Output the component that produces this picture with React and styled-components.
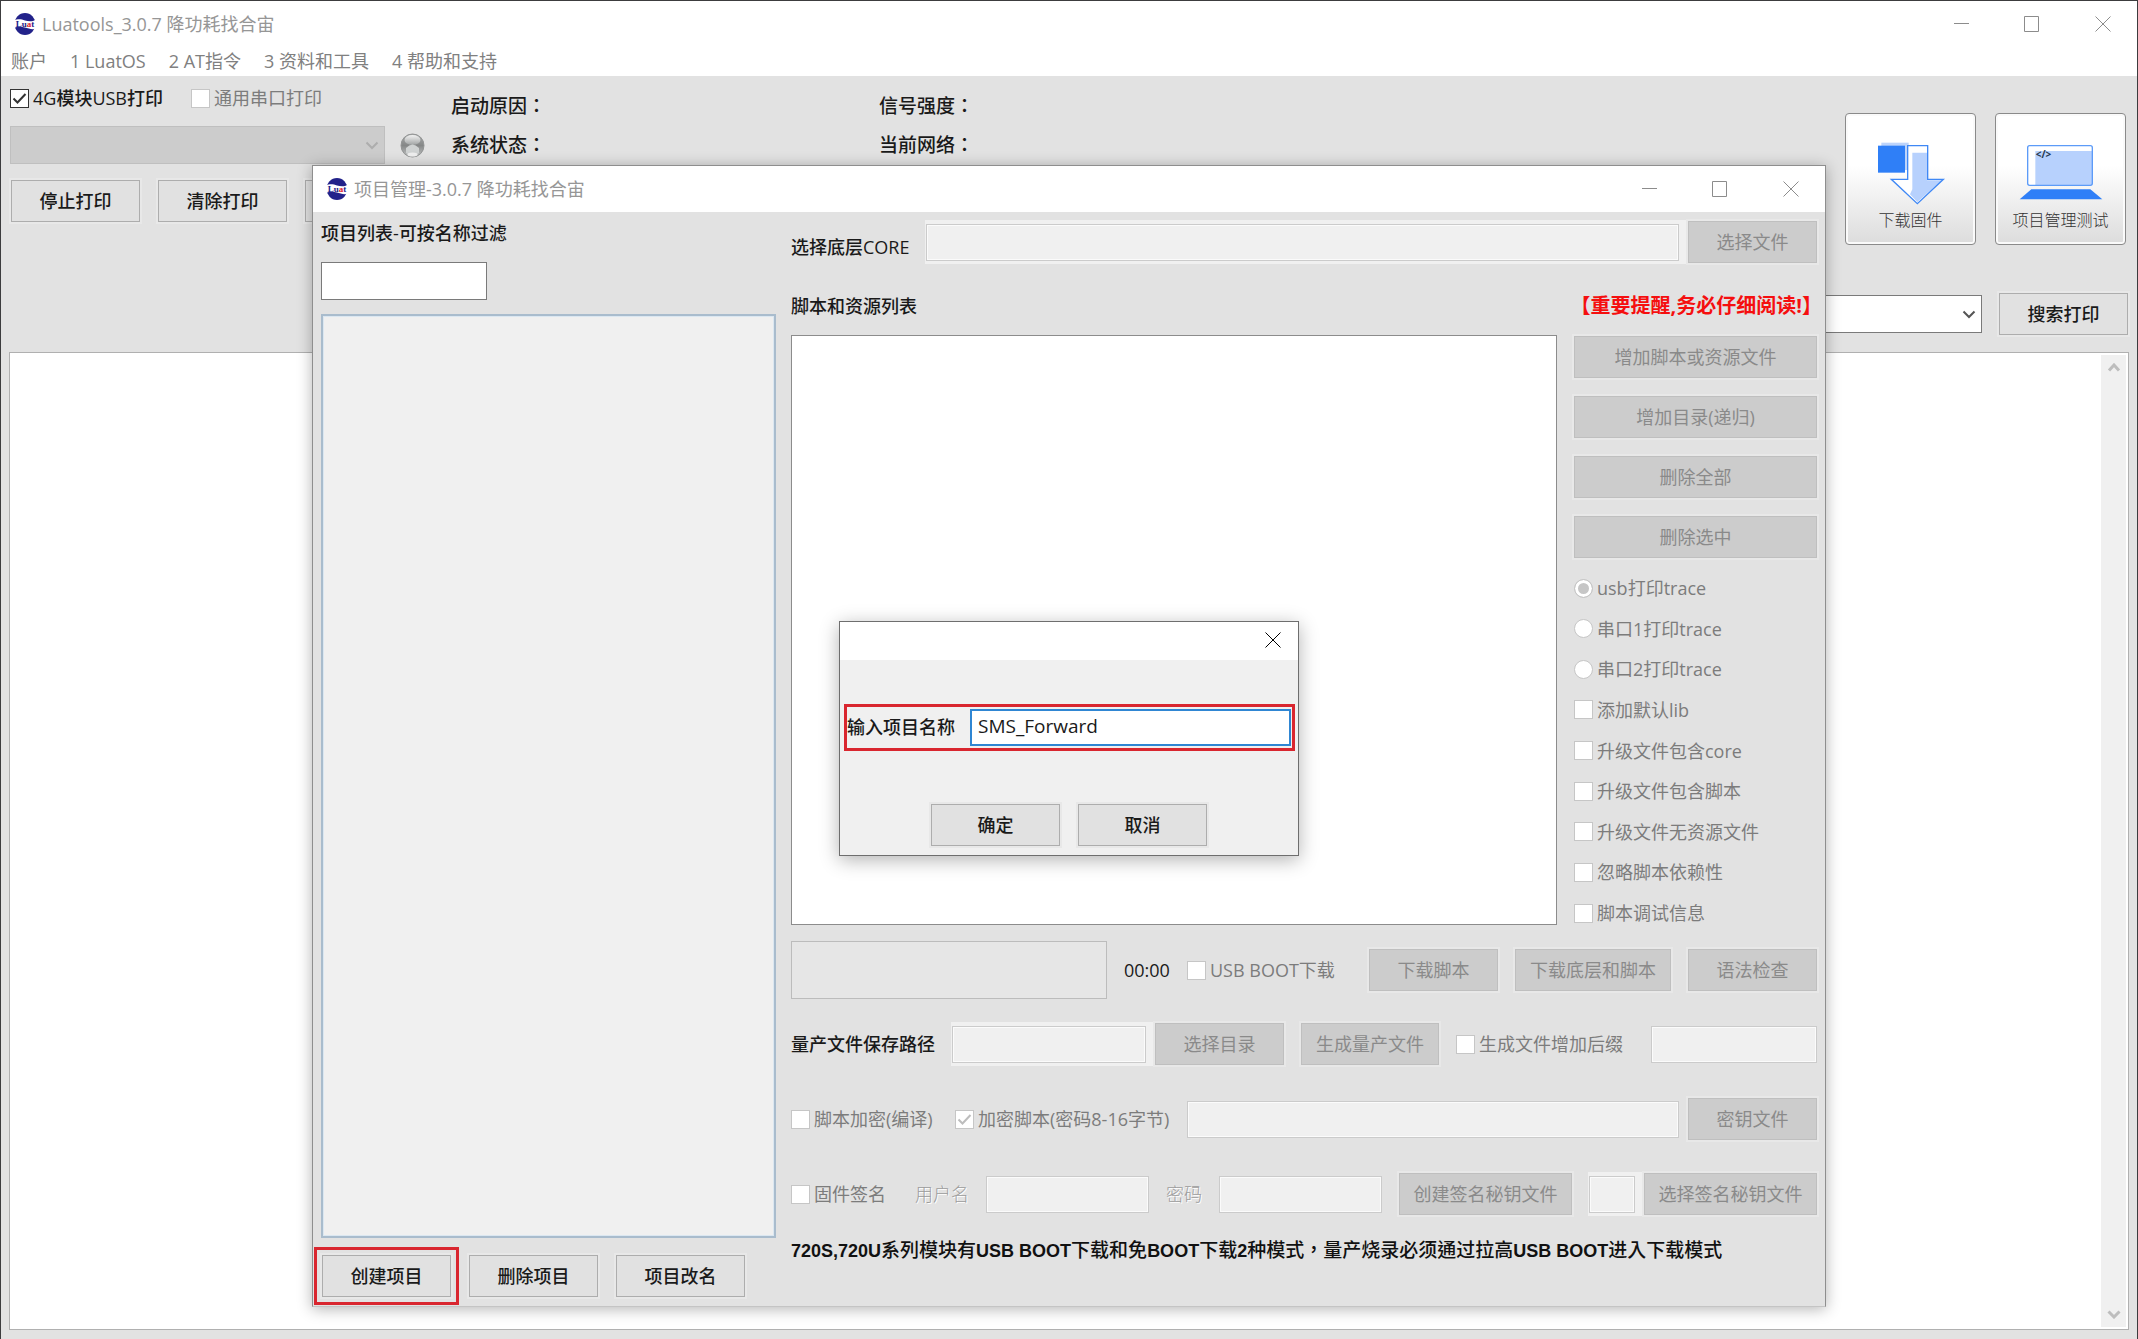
import { useId } from 'react';
import styled, { createGlobalStyle } from 'styled-components';

const GlobalStyle = createGlobalStyle`
  * {
    box-sizing: border-box;
  }
  body {
    margin: 0;
    background: #e2e2e2;
    color: #1a1a1a;
    font-family: 'Open Sans', 'Noto Sans CJK SC', sans-serif;
    font-size: 18px;
    line-height: 24px;
  }
  button, input, select, textarea {
    font: inherit;
    color: inherit;
    margin: 0;
  }
`;

/* ---------- window chrome ---------- */

const MainWindow = styled.main`
  position: relative;
  display: flex;
  flex-direction: column;
  min-height: 100vh;
  border: 1px solid #3c3c3e;
  border-bottom: 0;
  background: #e2e2e2;
`;
const Bar = styled.header`
  display: flex;
  align-items: center;
  justify-content: space-between;
  height: 46px;
  padding: 0 26px 1px 13px;
  background: #fff;
`;
const BarTitle = styled.h1`
  display: flex;
  align-items: center;
  gap: 6px;
  margin: 0;
  color: #969696;
  font-size: 18px;
  font-weight: 400;
`;
const BarButtons = styled.div`
  display: flex;
  gap: 55px;
`;
const BarButton = styled.button`
  display: flex;
  padding: 0;
  border: 0;
  background: none;
  color: ${(props) => props.$color || '#8c8c8c'};
`;
const Menu = styled.nav`
  display: flex;
  gap: 23px;
  height: 29px;
  padding: 2px 10px 0;
  background: #fff;
`;
const MenuLink = styled.a`
  color: #808080;
  text-decoration: none;
`;

/* ---------- shared controls ---------- */

const Button = styled.button`
  flex: none;
  width: ${(props) => (props.$width ? `${props.$width}px` : 'auto')};
  height: 42px;
  padding: 0;
  border: 1px solid #adadad;
  background: #e1e1e1;
  box-shadow: 0 0 0 2px #e8e8e8;
  font-weight: 500;
  white-space: nowrap;

  &:disabled {
    border-color: #bfbfbf;
    background: #ccc;
    color: #8a8a8a;
    font-weight: 400;
  }
`;
const TextInput = styled.input`
  flex: ${(props) => (props.$width ? 'none' : '1')};
  width: ${(props) => (props.$width ? `${props.$width}px` : 'auto')};
  min-width: 0;
  height: 37px;
  padding: 0 6px;
  border: 1px solid #7a7a7a;
  border-radius: 0;
  outline: none;
  background: #fff;

  &:disabled {
    border-color: #cbcbcb;
    background: #f0f0f0;
    box-shadow: inset 0 0 0 1px #fbfbfb;
  }
`;
const Label = styled.label`
  flex: none;
  color: #1a1a1a;
  font-weight: 500;
  white-space: nowrap;
`;
const CoreLabel = styled(Label)`
  padding-bottom: 4px;
`;
const DimLabel = styled(Label)`
  color: #9c9c9c;
  font-weight: 300;
  text-shadow: 1px 1px 0 #fff;
`;
const CheckLabel = styled.label`
  display: flex;
  flex: none;
  align-items: center;
  gap: 4px;
  width: ${(props) => (props.$width ? `${props.$width}px` : 'auto')};
  color: ${(props) => (props.$dim ? '#7c7c7c' : '#1a1a1a')};
  font-weight: ${(props) => (props.$dim ? 400 : 500)};
  white-space: nowrap;
`;
const Mark = styled.span`
  display: grid;
  width: 19px;
  height: 19px;
  color: ${(props) => (props.$dim ? '#bdbdbd' : '#333')};

  > * {
    grid-area: 1 / 1;
  }
  svg {
    pointer-events: none;
  }
`;
const MarkInput = styled.input`
  appearance: none;
  width: 19px;
  height: 19px;
  border: 1px solid #333;
  border-radius: ${(props) => (props.type === 'radio' ? '50%' : '0')};
  background: #fff;

  &:disabled {
    border-color: #c6c6c6;
  }
  &[type='radio']:checked {
    background: #c6c6c6;
    box-shadow: inset 0 0 0 3px #fff;
  }
`;
const SelectBox = styled.div`
  position: relative;
  flex: none;
  width: ${(props) => props.$width}px;

  svg {
    position: absolute;
    top: 15px;
    right: 6px;
    pointer-events: none;
    color: ${(props) => (props.$dim ? '#adadad' : '#555')};
  }
`;
const Select = styled.select`
  display: block;
  appearance: none;
  width: 100%;
  height: 38px;
  border: 1px solid #7a7a7a;
  border-radius: 0;
  background: #fff;

  &:disabled {
    border-color: #bfbfbf;
    background: #ccc;
    opacity: 1;
  }
`;

/* ---------- main window ---------- */

const Controls = styled.section`
  display: flex;
  align-items: flex-start;
  padding: 0 11px 0 9px;
`;
const PortColumn = styled.div`
  display: flex;
  flex-direction: column;
  gap: 16px;
  width: 441px;
  padding-top: 10px;
`;
const PortRow = styled.div`
  display: flex;
  align-items: center;
  gap: ${(props) => props.$gap}px;
  padding-left: ${(props) => props.$left || 0}px;
`;
const StatusGrid = styled.dl`
  display: grid;
  grid-template-columns: repeat(2, 428px);
  grid-auto-rows: 39px;
  flex: 1;
  align-items: center;
  margin: 0;
  padding-top: 9px;
  font-family: 'Noto Sans CJK TC', sans-serif;
  font-size: 19px;
  font-weight: 500;
`;
const Tools = styled.div`
  display: flex;
  gap: 19px;
  padding-top: 37px;
`;
const ToolButton = styled.button`
  display: flex;
  flex-direction: column;
  align-items: center;
  gap: 2px;
  width: 131px;
  height: 132px;
  padding: 27px 0 0;
  border: 1px solid #8a8a8a;
  border-radius: 4px;
  background: linear-gradient(#fff 40%, #dcdcdc);
  box-shadow: inset 0 0 0 2px #fafafa;
  color: #333;
  font-size: 16px;
  font-weight: 300;
`;
const SearchRow = styled.div`
  display: flex;
  align-items: center;
  justify-content: flex-end;
  gap: 17px;
  margin: 48px 0 17px;
  padding-right: 9px;
`;
const Log = styled.section`
  display: flex;
  flex: 1;
  margin: 0 8px 9px;
  padding: 2px;
  border: 1px solid #b0b0b0;
  background: #fff;
`;
const LogText = styled.textarea`
  flex: 1;
  border: 0;
  outline: none;
  resize: none;
  background: #fff;
`;
const ScrollTrack = styled.div`
  display: flex;
  flex-direction: column;
  justify-content: space-between;
  width: 25px;
  background: #f0f0f0;
`;
const ScrollButton = styled.button`
  display: grid;
  place-items: center;
  height: 25px;
  padding: 0;
  border: 0;
  background: none;
  color: #bdbdbd;
`;

/* ---------- project manager ---------- */

const ProjectWindow = styled.section`
  position: absolute;
  top: 164px;
  right: 311px;
  bottom: 32px;
  left: 311px;
  display: flex;
  flex-direction: column;
  border: 1px solid #8e8e8e;
  border-bottom-color: #c4c4c4;
  background: #e2e2e2;
  box-shadow: 0 2px 14px rgba(0, 0, 0, 0.3);
`;
const ProjectBody = styled.div`
  display: grid;
  flex: 1;
  grid-template-columns: 455px minmax(0, 1fr);
  gap: 15px;
  padding: 9px 8px 9px;
`;
const Column = styled.div`
  display: flex;
  flex-direction: column;
  align-items: ${(props) => props.$align || 'stretch'};
`;
const FilterInput = styled(TextInput)`
  flex: none;
  height: 38px;
  margin: 17px 0 14px;
`;
const ProjectList = styled.ul`
  flex: 1;
  align-self: stretch;
  margin: 0 0 17px;
  padding: 0;
  border: 2px solid #a9bccd;
  background: #f0f0f0;
  box-shadow: inset 0 0 0 1px #dbe7f1;
`;
const ProjectActions = styled.div`
  display: flex;
  gap: 18px;
  padding-left: 1px;
`;
const Highlighted = styled.div`
  position: relative;

  &::after {
    content: '';
    position: absolute;
    inset: -8px;
    border: 3px solid #d9262f;
    pointer-events: none;
  }
`;
const Row = styled.div`
  display: flex;
  align-items: ${(props) => props.$align || 'center'};
  gap: 17px;
  margin-top: ${(props) => props.$top || 0}px;
`;
const Picker = styled.div`
  display: flex;
  flex: ${(props) => (props.$fixed ? 'none' : '1')};
  align-items: center;
  gap: 9px;
  min-width: 0;
  background: ${(props) => (props.$plain ? 'none' : '#f0f0f0')};
  box-shadow: ${(props) => (props.$plain ? 'none' : '0 0 0 1px #f0f0f0')};
`;
const ListHeader = styled.div`
  display: flex;
  justify-content: space-between;
  margin: 31px 0 17px;
`;
const Notice = styled.a`
  color: #f50f0f;
  font-size: 20px;
  font-weight: 700;
  text-decoration: none;
  margin-right: -5px;
`;
const Workspace = styled.div`
  display: grid;
  flex: 1;
  grid-template-columns: minmax(0, 1fr) 243px;
  gap: 17px;
`;
const ScriptList = styled.ul`
  margin: 0;
  padding: 0;
  border: 1px solid #8c8c8c;
  background: #fff;
`;
const SideColumn = styled.div`
  display: flex;
  flex-direction: column;
  gap: 18px;
  padding-top: 1px;
`;
const Options = styled.div`
  display: flex;
  flex: 1;
  flex-direction: column;
  justify-content: space-between;
`;
const Progress = styled.div`
  flex: 1;
  height: 58px;
  border: 1px solid #bcbcbc;
  background: #e6e6e6;
`;
const Clock = styled.time`
  width: 46px;
  font-weight: 500;
`;
const Footnote = styled.p`
  margin: 24px 0 34px;
  color: #111;
  font-family: 'Liberation Sans', 'Noto Sans CJK TC', sans-serif;
  font-size: 19px;
  font-weight: 500;
  white-space: nowrap;

  b {
    font-size: 18px;
  }
`;

/* ---------- name prompt ---------- */

const Overlay = styled.div`
  position: absolute;
  inset: 0;
  display: grid;
  place-items: center;
  padding-top: 5px;
`;
const Prompt = styled.form`
  width: 460px;
  border: 1px solid #6e6e6e;
  background: #f0f0f0;
  box-shadow: 0 4px 18px rgba(0, 0, 0, 0.3);
`;
const PromptBar = styled.header`
  display: flex;
  align-items: center;
  justify-content: flex-end;
  height: 38px;
  padding: 0 17px 2px;
  background: #fff;
`;
const PromptField = styled.div`
  display: flex;
  align-items: center;
  justify-content: space-between;
  margin: 44px 3px 53px 4px;
  height: 47px;
  padding: 0 1px 1px 0;
  border: 3px solid #d9262f;
`;
const NameInput = styled(TextInput)`
  padding-bottom: 3px;
  border: 2px solid #2f86d3;
  font-size: 19px;
`;
const PromptActions = styled.div`
  display: flex;
  justify-content: center;
  gap: 18px;
  padding-bottom: 9px;
`;

/* ---------- drawings ---------- */

const Logo = () => (
  <svg width="22" height="22" viewBox="0 0 44 44" aria-hidden="true">
    <ellipse cx="22" cy="22" rx="21" ry="22" fill="#22228a" />
    <path d="M0 15C9 11 15 13 22 15S37 18 44 13V31C37 34 29 31 22 29S7 26 0 30Z" fill="#fff" />
    <text x="22" y="28" textAnchor="middle" fontFamily="Liberation Serif, serif" fontSize="18" fontWeight="700" fill="#22228a">
      Lu<tspan fill="#e0202c">a</tspan>t
    </text>
  </svg>
);
const MinIcon = () => (
  <svg width="16" height="16" viewBox="0 0 16 16" stroke="currentColor" fill="none">
    <path d="M1 7.5H16" />
  </svg>
);
const MaxIcon = () => (
  <svg width="16" height="16" viewBox="0 0 16 16" stroke="currentColor" fill="none">
    <path d="M.5 .5H14.5V15.5H.5Z" />
  </svg>
);
const CloseIcon = () => (
  <svg width="16" height="16" viewBox="0 0 16 16" stroke="currentColor" fill="none">
    <path d="M.5 .5L15.5 15.5M15.5 .5L.5 15.5" />
  </svg>
);
const Chevron = ({ up, bold }) => (
  <svg width="14" height="9" viewBox="0 0 14 9" stroke="currentColor" strokeWidth={bold ? 3 : 2} fill="none">
    <path d={up ? 'M2 7.5L7 2L12 7.5' : 'M1.5 1.5L7 7L12.5 1.5'} />
  </svg>
);
const Led = () => (
  <svg width="25" height="25" viewBox="0 0 25 25" aria-hidden="true">
    <defs>
      <linearGradient id="ledBody" x2="0" y2="1">
        <stop offset="0" stopColor="#a9abab" />
        <stop offset=".5" stopColor="#858787" />
        <stop offset="1" stopColor="#c4c6c6" />
      </linearGradient>
      <linearGradient id="ledShine" x2="0" y2="1">
        <stop offset="0" stopColor="#f2f2f2" />
        <stop offset="1" stopColor="#a0a3a3" />
      </linearGradient>
    </defs>
    <circle cx="12.5" cy="12.5" r="11.5" fill="url(#ledBody)" stroke="#929494" />
    <ellipse cx="12.5" cy="7" rx="8" ry="5" fill="url(#ledShine)" />
    <path d="M6 15Q12.500 8 19 15V20Q12.500 26 6 20Z" fill="#cfd2d2" />
    <ellipse cx="12.5" cy="21.5" rx="5" ry="2" fill="#efefef" />
  </svg>
);
const DownloadIcon = () => (
  <svg width="70" height="65" viewBox="290 425 210 195" aria-hidden="true">
    <path d="M306 430H388V512H306Z" fill="#bdd4fb" />
    <path d="M296 439H377V520H296Z" fill="#2f7ff7" />
    <path d="M385 439H445V540H492L414 613L336 540H385Z" fill="#fff" />
    <path d="M399 460H443V543H487L414 608L392 585L399 570Z" fill="#b7d1fd" />
    <path d="M385 439H445V540H492L414 613L336 540H385Z" fill="none" stroke="#3f88f5" strokeWidth="4" />
  </svg>
);
const LaptopIcon = () => (
  <svg width="86" height="65" viewBox="715 425 258 195" aria-hidden="true">
    <rect x="744" y="439" width="194" height="119" rx="6" fill="#fff" />
    <path d="M767 455H937V557H767Z" fill="#b7d1fd" />
    <rect x="744" y="439" width="194" height="119" rx="6" fill="none" stroke="#5c9bf8" strokeWidth="4" />
    <path d="M755 570H932L968 600H720Z" fill="#2f7ff7" />
    <text x="768" y="476" fontFamily="Open Sans, sans-serif" fontSize="30" fontWeight="700" fill="#26384f">
      {'</>'}
    </text>
  </svg>
);

/* ---------- pieces ---------- */

const Check = ({ label, type = 'checkbox', width, enabled, ...rest }) => {
  const id = useId();
  return (
    <CheckLabel htmlFor={id} $width={width} $dim={!enabled}>
      <Mark $dim={!enabled}>
        <MarkInput id={id} type={type} disabled={!enabled} {...rest} />
        {type === 'checkbox' && rest.defaultChecked && (
          <svg width="19" height="19" viewBox="0 0 19 19" stroke="currentColor" strokeWidth="2" fill="none">
            <path d="M3.500 9.500L7.500 13.500L15.500 5" />
          </svg>
        )}
      </Mark>
      {label}
    </CheckLabel>
  );
};

const WindowButtons = () => (
  <BarButtons>
    <BarButton aria-label="最小化"><MinIcon /></BarButton>
    <BarButton aria-label="最大化"><MaxIcon /></BarButton>
    <BarButton aria-label="关闭"><CloseIcon /></BarButton>
  </BarButtons>
);

const menuItems = ['账户', '1 LuatOS', '2 AT指令', '3 资料和工具', '4 帮助和支持'];
const statuses = ['启动原因：', '信号强度：', '系统状态：', '当前网络：'];
const sideButtons = ['增加脚本或资源文件', '增加目录(递归)', '删除全部', '删除选中'];
const traces = ['usb打印trace', '串口1打印trace', '串口2打印trace'];
const flags = [
  '添加默认lib',
  '升级文件包含core',
  '升级文件包含脚本',
  '升级文件无资源文件',
  '忽略脚本依赖性',
  '脚本调试信息',
];

const NamePrompt = () => (
  <Overlay>
    <Prompt role="dialog" onSubmit={(e) => e.preventDefault()}>
      <PromptBar>
        <BarButton type="button" aria-label="关闭" $color="#000"><CloseIcon /></BarButton>
      </PromptBar>
      <PromptField>
        <Label htmlFor="projectName">输入项目名称</Label>
        <NameInput id="projectName" $width={321} defaultValue="SMS_Forward" />
      </PromptField>
      <PromptActions>
        <Button type="submit" $width={129}>确定</Button>
        <Button type="button" $width={129}>取消</Button>
      </PromptActions>
    </Prompt>
  </Overlay>
);

const ProjectManager = () => (
  <ProjectWindow>
    <Bar>
      <BarTitle as="h2"><Logo />项目管理-3.0.7 降功耗找合宙</BarTitle>
      <WindowButtons />
    </Bar>
    <ProjectBody>
      <Column $align="flex-start">
        <Label htmlFor="filter">项目列表-可按名称过滤</Label>
        <FilterInput id="filter" $width={166} />
        <ProjectList />
        <ProjectActions>
          <Highlighted><Button $width={129}>创建项目</Button></Highlighted>
          <Button $width={129}>删除项目</Button>
          <Button $width={129}>项目改名</Button>
        </ProjectActions>
      </Column>
      <Column>
        <Row $align="flex-end">
          <CoreLabel htmlFor="core">选择底层CORE</CoreLabel>
          <Picker>
            <TextInput id="core" disabled />
            <Button disabled $width={129}>选择文件</Button>
          </Picker>
        </Row>
        <ListHeader>
          <Label as="span">脚本和资源列表</Label>
          <Notice href="#notice">【重要提醒,务必仔细阅读!】</Notice>
        </ListHeader>
        <Workspace>
          <ScriptList />
          <SideColumn>
            {sideButtons.map((text) => (
              <Button key={text} disabled>{text}</Button>
            ))}
            <Options>
              {traces.map((text, i) => (
                <Check key={text} type="radio" name="trace" label={text} defaultChecked={i === 0} />
              ))}
              {flags.map((text) => (
                <Check key={text} label={text} />
              ))}
            </Options>
          </SideColumn>
        </Workspace>
        <Row $top={16}>
          <Progress />
          <Clock>00:00</Clock>
          <Check label="USB BOOT下载" width={165} />
          <Button disabled $width={129}>下载脚本</Button>
          <Button disabled $width={156}>下载底层和脚本</Button>
          <Button disabled $width={129}>语法检查</Button>
        </Row>
        <Row $top={24}>
          <Label htmlFor="savePath">量产文件保存路径</Label>
          <Picker>
            <TextInput id="savePath" disabled />
            <Button disabled $width={129}>选择目录</Button>
          </Picker>
          <Button disabled $width={138}>生成量产文件</Button>
          <Check label="生成文件增加后缀" width={178} />
          <TextInput aria-label="后缀" disabled $width={166} />
        </Row>
        <Row $top={33}>
          <Check label="脚本加密(编译)" width={147} />
          <Check label="加密脚本(密码8-16字节)" width={215} defaultChecked />
          <Picker $plain>
            <TextInput aria-label="密钥" disabled />
            <Button disabled $width={129}>密钥文件</Button>
          </Picker>
        </Row>
        <Row $top={33}>
          <Check label="固件签名" width={107} />
          <DimLabel htmlFor="user">用户名</DimLabel>
          <TextInput id="user" disabled />
          <DimLabel htmlFor="password">密码</DimLabel>
          <TextInput id="password" disabled />
          <Button disabled $width={173}>创建签名秘钥文件</Button>
          <Picker $fixed>
            <TextInput aria-label="秘钥" disabled $width={46} />
            <Button disabled $width={173}>选择签名秘钥文件</Button>
          </Picker>
        </Row>
        <Footnote>
          <b>720S,720U</b>系列模块有<b>USB BOOT</b>下载和免<b>BOOT</b>下载<b>2</b>种模式，量产烧录必须通过拉高<b>USB BOOT</b>进入下载模式
        </Footnote>
      </Column>
    </ProjectBody>
    <NamePrompt />
  </ProjectWindow>
);

const App = () => {
  return (
    <>
      <GlobalStyle />
      <MainWindow>
        <Bar>
          <BarTitle><Logo />Luatools_3.0.7 降功耗找合宙</BarTitle>
          <WindowButtons />
        </Bar>
        <Menu>
          {menuItems.map((text) => (
            <MenuLink key={text} href="#menu">{text}</MenuLink>
          ))}
        </Menu>
        <Controls>
          <PortColumn>
            <PortRow $gap={28}>
              <Check label="4G模块USB打印" enabled defaultChecked />
              <Check label="通用串口打印" />
            </PortRow>
            <PortRow $gap={15}>
              <SelectBox $width={375} $dim>
                <Select aria-label="串口" disabled />
                <Chevron />
              </SelectBox>
              <Led />
            </PortRow>
            <PortRow $gap={18} $left={1}>
              <Button $width={129}>停止打印</Button>
              <Button $width={129}>清除打印</Button>
              <Button $width={129} aria-label="打印" />
            </PortRow>
          </PortColumn>
          <StatusGrid>
            {statuses.map((text) => (
              <dt key={text}>{text}</dt>
            ))}
          </StatusGrid>
          <Tools>
            <ToolButton><DownloadIcon />下载固件</ToolButton>
            <ToolButton><LaptopIcon />项目管理测试</ToolButton>
          </Tools>
        </Controls>
        <SearchRow>
          <SelectBox $width={420}>
            <Select aria-label="搜索" />
            <Chevron />
          </SelectBox>
          <Button $width={129}>搜索打印</Button>
        </SearchRow>
        <Log>
          <LogText aria-label="日志" />
          <ScrollTrack>
            <ScrollButton aria-label="向上"><Chevron up bold /></ScrollButton>
            <ScrollButton aria-label="向下"><Chevron bold /></ScrollButton>
          </ScrollTrack>
        </Log>
        <ProjectManager />
      </MainWindow>
    </>
  );
};

export default App;
